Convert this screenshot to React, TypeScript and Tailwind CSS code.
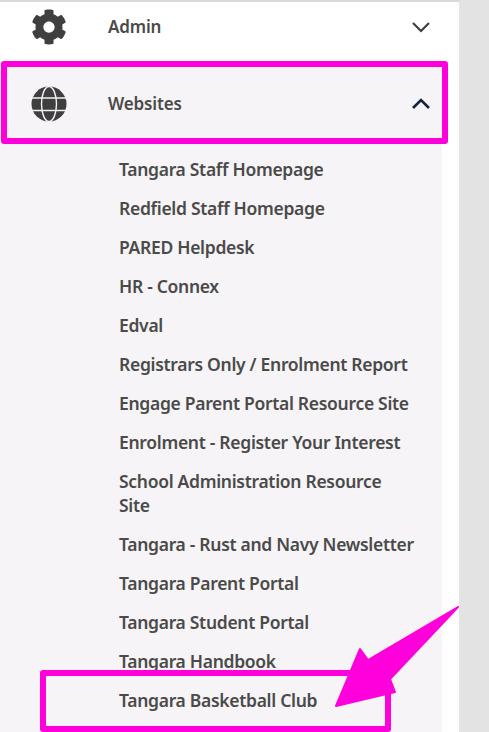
import React from "react";

const links: string[] = [
  "Tangara Staff Homepage",
  "Redfield Staff Homepage",
  "PARED Helpdesk",
  "HR - Connex",
  "Edval",
  "Registrars Only / Enrolment Report",
  "Engage Parent Portal Resource Site",
  "Enrolment - Register Your Interest",
  "School Administration Resource Site",
  "Tangara - Rust and Navy Newsletter",
  "Tangara Parent Portal",
  "Tangara Student Portal",
  "Tangara Handbook",
  "Tangara Basketball Club",
];

const Gear = () => (
  <svg width="36" height="36" viewBox="0 0 512 512" fill="#3f3f3f">
    <path d="M487.4 315.7l-42.6-24.6c4.3-23.2 4.3-47 0-70.2l42.6-24.6c4.9-2.8 7.1-8.6 5.5-14-11.1-35.6-30-67.8-54.7-94.6-3.8-4.1-10-5.1-14.8-2.3L380.8 110c-17.9-15.4-38.5-27.3-60.8-35.1V25.8c0-5.6-3.9-10.5-9.4-11.7-36.7-8.2-74.3-7.8-109.2 0-5.5 1.2-9.4 6.1-9.4 11.7V75c-22.2 7.9-42.8 19.8-60.8 35.1L88.7 85.5c-4.9-2.8-11-1.9-14.8 2.3-24.7 26.7-43.6 58.9-54.7 94.6-1.7 5.4.6 11.2 5.5 14L67.3 221c-4.3 23.2-4.3 47 0 70.2l-42.6 24.6c-4.9 2.8-7.1 8.6-5.5 14 11.1 35.6 30 67.8 54.7 94.6 3.8 4.1 10 5.1 14.8 2.3l42.6-24.6c17.9 15.4 38.5 27.3 60.8 35.1v49.2c0 5.6 3.9 10.5 9.4 11.7 36.7 8.2 74.3 7.8 109.2 0 5.5-1.2 9.4-6.1 9.4-11.7v-49.2c22.2-7.9 42.8-19.8 60.8-35.1l42.6 24.6c4.9 2.8 11 1.9 14.8-2.3 24.7-26.7 43.6-58.9 54.7-94.6 1.5-5.5-.7-11.3-5.6-14.1zM256 336c-44.1 0-80-35.9-80-80s35.9-80 80-80 80 35.9 80 80-35.9 80-80 80z" />
  </svg>
);

const Globe = () => (
  <svg width="36" height="36" viewBox="0 0 36 36">
    <circle cx="18" cy="18" r="17.5" fill="#3f3f3f" />
    <g fill="none" stroke="#f5f3f5" strokeWidth="1.4">
      <ellipse cx="18" cy="18" rx="7.5" ry="17.5" />
      <path d="M0 12H36M0 24.5H36" />
    </g>
  </svg>
);

export default function App() {
  return (
    <div
      className="relative h-[732px] w-[489px] overflow-hidden bg-[#e3e3e3] text-[#4a4a4a]"
      style={{ fontFamily: '"Noto Sans", "Liberation Sans", sans-serif' }}
    >
      <div className="h-[732px] w-[459px] overflow-hidden border-t-2 border-[#d9d9d9] bg-white">
        <div className="flex h-[50px] items-center pl-[31px] pr-[28px]">
          <Gear />
          <span className="ml-[41px] flex-1 text-[17px] font-semibold leading-6 tracking-[-0.15px]">Admin</span>
          <svg width="20" height="12" viewBox="0 0 20 12" fill="none" stroke="#3f3f3f" strokeWidth="2.2">
            <path d="M2 2l8 8 8-8" />
          </svg>
        </div>
        <div className="mt-[11px] w-[442px] bg-[#f6f4f6] pb-[30px]">
          <div className="flex h-[82px] items-center pl-[31px] pr-[11px]">
            <Globe />
            <span className="ml-[41px] flex-1 text-[17px] font-semibold leading-6 tracking-[-0.15px]">Websites</span>
            <svg width="20" height="12" viewBox="0 0 20 12" fill="none" stroke="#14233f" strokeWidth="2.6">
              <path d="M2 10l8-8 8 8" />
            </svg>
          </div>
          <ul className="pl-[119px] pr-[26px] pt-[4px]">
            {links.map((l) => (
              <li key={l} className="py-[7.5px] text-[17.5px] font-semibold leading-6 tracking-[-0.3px]">
                {l}
              </li>
            ))}
          </ul>
        </div>
      </div>

      <div className="absolute left-[1px] top-[61px] h-[83px] w-[447px] rounded-[3px] border-[6px] border-[#ff00dd]" />
      <div className="absolute left-[40px] top-[670px] h-[62px] w-[351px] rounded-[3px] border-[6px] border-[#ff00dd]" />
      <svg className="absolute left-[330px] top-[600px]" width="130" height="115" viewBox="0 0 130 115" fill="#ff00dd">
        <path
          d="M128 7 L38 60 L30 49 L6 106 L65 92 L60 79 Z"
          stroke="#ff00dd"
          strokeWidth="2"
          strokeLinejoin="round"
        />
      </svg>
    </div>
  );
}
